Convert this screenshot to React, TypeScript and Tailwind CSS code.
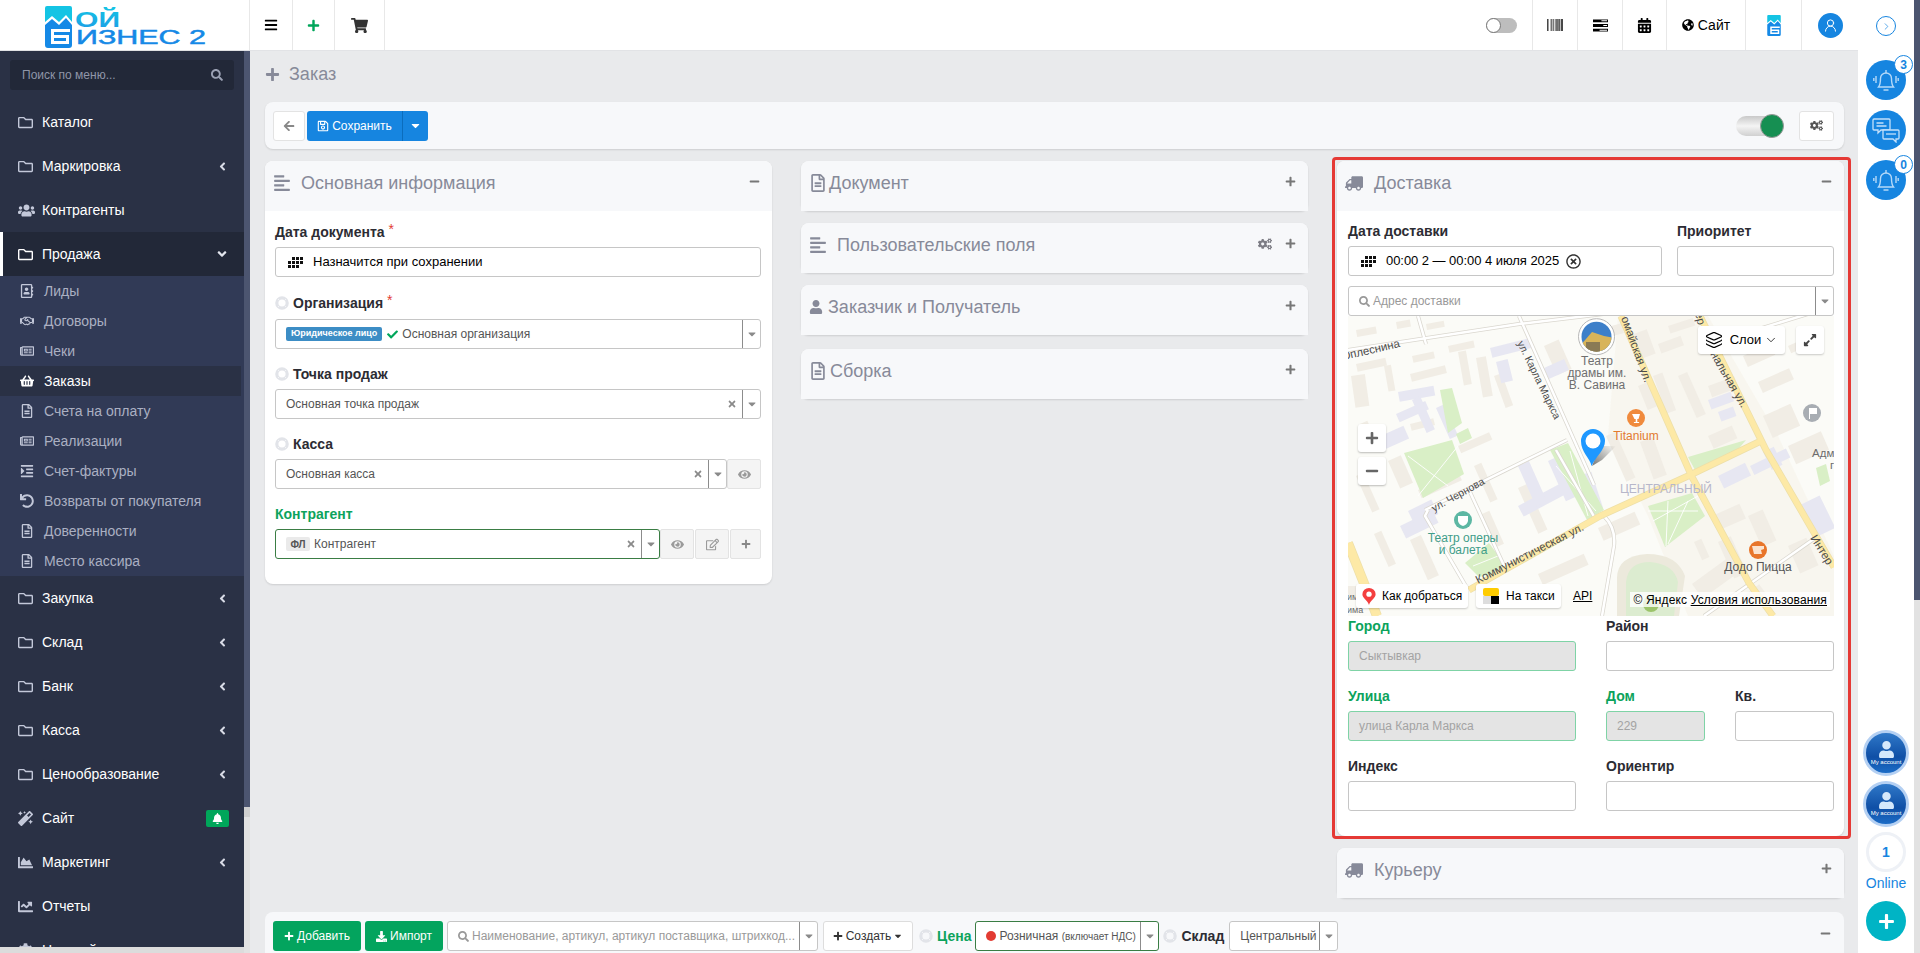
import { ReactNode } from "react";
import {
  FaAlignLeft, FaAngleDown, FaAngleLeft, FaArrowLeft, FaBars, FaBell, FaCalendarAlt, FaCaretDown, FaChartArea,
  FaChartLine, FaCheck, FaCog, FaCogs, FaDownload, FaEye, FaGlobeAmericas, FaIndent, FaMagic, FaMinus,
  FaPlus, FaRegAddressBook, FaRegEdit, FaRegFileAlt, FaRegFolder, FaRegHandshake, FaRegNewspaper, FaRegSave, FaSearch, FaShoppingBasket,
  FaShoppingCart, FaTimes, FaTruck, FaUndo, FaUser, FaUsers, FaBarcode, FaExpandAlt, FaRegTimesCircle,
} from "react-icons/fa";
import { ChevronDown, ChevronRight, Layers, UserRound } from "lucide-react";

const topMenu = [
  { label: "Каталог", icon: FaRegFolder },
  { label: "Маркировка", icon: FaRegFolder, arrow: true },
  { label: "Контрагенты", icon: FaUsers, big: true },
];

const subMenu = [
  { label: "Лиды", icon: FaRegAddressBook },
  { label: "Договоры", icon: FaRegHandshake },
  { label: "Чеки", icon: FaRegNewspaper },
  { label: "Заказы", icon: FaShoppingBasket, active: true },
  { label: "Счета на оплату", icon: FaRegFileAlt },
  { label: "Реализации", icon: FaRegNewspaper },
  { label: "Счет-фактуры", icon: FaIndent },
  { label: "Возвраты от покупателя", icon: FaUndo },
  { label: "Доверенности", icon: FaRegFileAlt },
  { label: "Место кассира", icon: FaRegFileAlt },
];

const bottomMenu = [
  { label: "Закупка", icon: FaRegFolder, arrow: true },
  { label: "Склад", icon: FaRegFolder, arrow: true },
  { label: "Банк", icon: FaRegFolder, arrow: true },
  { label: "Касса", icon: FaRegFolder, arrow: true },
  { label: "Ценообразование", icon: FaRegFolder, arrow: true },
  { label: "Сайт", icon: FaMagic, bell: true },
  { label: "Маркетинг", icon: FaChartArea, arrow: true },
  { label: "Отчеты", icon: FaChartLine },
  { label: "Настройки", icon: FaCog },
];

type MenuEntry = { label: string; icon: any; arrow?: boolean; bell?: boolean; big?: boolean };

function MenuRow({ item }: { item: MenuEntry }) {
  return (
    <div className="flex h-[44px] items-center pl-[18px] pr-[15px] text-[14px] text-white">
      <span className="flex w-[24px] shrink-0 text-[#c3c8d9]">
        <item.icon size={item.big ? 17 : 15} />
      </span>
      <span>{item.label}</span>
      {item.arrow && <FaAngleLeft size={13} className="ml-auto text-[#d8dbe6]" />}
      {item.bell && (
        <span className="ml-auto flex h-[17px] w-[23px] items-center justify-center rounded-[2px] bg-[#00a65a]">
          <FaBell size={11} className="text-white" />
        </span>
      )}
    </div>
  );
}

function Sidebar() {
  return (
    <aside className="flex h-full w-[250px] shrink-0">
      <div className="flex h-full w-[244px] flex-col overflow-hidden bg-[#2a3145]">
        <div className="px-[10px] pb-[10px] pt-[9px]">
          <div className="flex h-[30px] items-center justify-between rounded-[3px] bg-[#222838] pl-[12px] pr-[11px] text-[12px] text-[#9096a8]">
            <span>Поиск по меню...</span>
            <FaSearch size={12} className="text-[#9ba1b3]" />
          </div>
        </div>
        <div className="min-h-0 flex-1 overflow-hidden">
          {topMenu.map((m) => <MenuRow key={m.label} item={m} />)}
          <div className="flex h-[44px] items-center border-l-[3px] border-white bg-[#222838] pl-[15px] pr-[15px] text-[14px] text-white">
            <FaRegFolder size={15} className="mr-[9px] text-white" />
            <span>Продажа</span>
            <FaAngleDown size={14} className="ml-auto text-[#e3e6ee]" />
          </div>
          <div className="flex flex-col bg-[#313a56]">
            {subMenu.map((m) => (
              <div key={m.label} className={`mr-[3px] flex h-[30px] items-center pl-[20px] text-[14px] ${m.active ? "bg-[#2a3145] text-white" : "text-[#abb0c2]"}`}>
                <span className={`flex w-[24px] shrink-0 ${m.active ? "text-white" : "text-[#c3c8d9]"}`}>
                  <m.icon size={14} />
                </span>
                {m.label}
              </div>
            ))}
          </div>
          {bottomMenu.map((m) => <MenuRow key={m.label} item={m} />)}
        </div>
        <div className="h-[6px] shrink-0 bg-[#dcdcdc]" />
      </div>
      <div className="flex h-full w-[6px] flex-col bg-[#e2e2e2]">
        <div className="h-[756px] bg-[#4c5570]" />
        <div className="h-[10px] bg-[#cfcfcf]" />
      </div>
    </aside>
  );
}

function LogoMark({ className }: { className: string }) {
  return (
    <svg viewBox="0 0 27 42" className={className}>
      <path d="M0 2q0-2 2-2h23q2 0 2 2v14l-6-7-7 7-7-6-7 6z" fill="#14c4e4" />
      <path d="M0 19l7-6 7 6 7-7 6 7v20q0 3-3 3H3q-3 0-3-3z" fill="#1589e6" />
      <path d="M6 23h19v3H9v3h15v9H6z" fill="#fff" />
      <path d="M9 32h12v3H9z" fill="#1589e6" />
    </svg>
  );
}

function Logo() {
  return (
    <div className="flex h-full w-[250px] shrink-0 items-start border-r border-[#e8e8e8] pl-[45px] pt-[6px]">
      <LogoMark className="h-[42px] w-[27px]" />
      <svg viewBox="0 0 135 42" className="h-[42px] w-[135px]">
        <defs>
          <linearGradient id="logoTop" x1="0" y1="0" x2="0" y2="1">
            <stop offset="0" stopColor="#14c4e4" />
            <stop offset="1" stopColor="#1d9ae6" />
          </linearGradient>
        </defs>
        <text x="3" y="21" textLength="45" lengthAdjust="spacingAndGlyphs" fontFamily="Liberation Sans" fontSize="22" fontWeight="700" fill="url(#logoTop)">ОЙ</text>
        <text x="4" y="38" textLength="130" lengthAdjust="spacingAndGlyphs" fontFamily="Liberation Sans" fontSize="20" fill="#1589e6" stroke="#1589e6" strokeWidth="0.5">ИЗНЕС 2</text>
      </svg>
    </div>
  );
}

function HeaderCell({ width, children }: { width: string; children: ReactNode }) {
  return <div className={`flex h-full items-center justify-center border-r border-[#e8e8e8] ${width}`}>{children}</div>;
}

function TasksIcon() {
  return (
    <svg viewBox="0 0 16 13" className="h-[13px] w-[15px]">
      <path d="M0 0h16v3H0zM0 5h16v3H0zM0 10h16v3H0z" fill="#000" />
      <path d="M9 1h6v1H9zM11 6h4v1h-4zM7 11h8v1H7z" fill="#fff" />
    </svg>
  );
}

function Header() {
  return (
    <header className="flex h-[51px] shrink-0 items-stretch border-b border-[#e2e3e6] bg-white">
      <Logo />
      <HeaderCell width="w-[43px]"><FaBars size={14} className="text-black" /></HeaderCell>
      <HeaderCell width="w-[42px]"><FaPlus size={13} className="text-[#00a65a]" /></HeaderCell>
      <HeaderCell width="w-[50px]"><FaShoppingCart size={17} className="text-[#333]" /></HeaderCell>
      <div className="ml-auto flex items-center">
        <div className="mr-[15px] flex h-[15px] w-[31px] items-center rounded-full bg-[#bdbdbd]">
          <span className="h-[15px] w-[15px] rounded-full border border-[#777] bg-white" />
        </div>
        <div className="flex h-full border-l border-[#e8e8e8]">
          <HeaderCell width="w-[45px]"><FaBarcode size={16} className="text-black" /></HeaderCell>
          <HeaderCell width="w-[45px]"><TasksIcon /></HeaderCell>
          <HeaderCell width="w-[44px]"><FaCalendarAlt size={15} className="text-black" /></HeaderCell>
          <HeaderCell width="w-[79px]">
            <FaGlobeAmericas size={12} className="mr-[4px] text-black" />
            <span className="text-[14px] text-black">Сайт</span>
          </HeaderCell>
          <HeaderCell width="w-[56px]"><LogoMark className="h-[21px] w-[14px]" /></HeaderCell>
          <div className="flex h-full w-[56px] items-center justify-center">
            <span className="flex h-[25px] w-[25px] items-center justify-center rounded-full bg-[#1685e0]">
              <UserRound size={15} className="text-white" strokeWidth={1.6} />
            </span>
          </div>
        </div>
      </div>
    </header>
  );
}

function GridIcon() {
  return (
    <svg viewBox="0 0 15 11" className="h-[11px] w-[15px]" fill="#111">
      <path d="M4 0h3v3H4zM8 0h3v3H8zM12 0h3v3h-3zM0 4h3v3H0zM4 4h3v3H4zM8 4h3v3H8zM12 4h3v3h-3zM0 8h3v3H0zM4 8h3v3H4zM8 8h3v3H8z" />
    </svg>
  );
}

// pale life ring next to the select labels
function Ring() {
  return (
    <svg viewBox="0 0 14 14" className="mr-[4px] h-[14px] w-[14px] shrink-0" fill="none">
      <circle cx="7" cy="7" r="5.200" stroke="#e2e4e9" strokeWidth="3.200" />
      <path d="M3 3l2 2M11 3L9 5M3 11l2-2M11 11L9 9" stroke="#f4f5f7" strokeWidth="1" />
    </svg>
  );
}

function Label({ children, color = "text-[#2c2c33]", className = "" }: { children: ReactNode; color?: string; className?: string }) {
  return <div className={`flex h-5 items-center text-[14px] font-bold ${color} ${className}`}>{children}</div>;
}

function Star() {
  return <span className="relative -top-[3px] ml-[4px] text-[14px] font-normal text-[#e23b32]">*</span>;
}

function Arrow() {
  return (
    <span className="flex h-full w-[18px] shrink-0 items-center justify-center border-l border-[#8c8c8c] text-[#8a8a8a]">
      <FaCaretDown size={12} />
    </span>
  );
}

function Addon({ children, className = "w-[34px]" }: { children: ReactNode; className?: string }) {
  return (
    <span className={`flex h-[30px] shrink-0 items-center justify-center rounded-[2px] border border-[#e3e3e3] bg-[#f4f4f4] text-[#9a9a9a] ${className}`}>
      {children}
    </span>
  );
}

function Select({ children, clear, border = "border-[#c6c6c6]", className = "flex-1" }: { children: ReactNode; clear?: boolean; border?: string; className?: string }) {
  return (
    <div className={`flex h-[30px] items-center rounded-[3px] border bg-white pl-[10px] text-[12px] text-[#555] ${border} ${className}`}>
      <div className="flex min-w-0 flex-1 items-center overflow-hidden whitespace-nowrap">{children}</div>
      {clear && <FaTimes size={10} className="mr-[5px] shrink-0 text-[#8a8a8a]" />}
      <Arrow />
    </div>
  );
}

function Input({ className = "", value, disabled }: { className?: string; value?: string; disabled?: boolean }) {
  return (
    <div className={`flex h-[30px] items-center rounded-[3px] border pl-[10px] text-[12px] ${disabled ? "border-[#7fd3a6] bg-[#e4e4e4] text-[#a3a3a3]" : "border-[#c6c6c6] bg-white"} ${className}`}>
      {value}
    </div>
  );
}

function CardHead({ icon, title, open, gear, gap = "ml-[10px]" }: { icon: ReactNode; title: string; open?: boolean; gear?: boolean; gap?: string }) {
  return (
    <div className="flex h-[50px] items-start rounded-t-[8px] bg-[#f7f8fa] pl-[8px] pr-[12px] pt-[11px] text-[#878a99]">
      <span className="flex h-[22px] w-[18px] shrink-0 items-center text-[#878a99]">{icon}</span>
      <span className={`text-[18px] leading-[22px] ${gap}`}>{title}</span>
      {gear && <FaCogs size={14} className="ml-auto mr-[13px] mt-[3px] text-[#7d7d85]" />}
      {open ? <FaMinus size={11} className="ml-auto mt-[4px] text-[#777]" /> : <FaPlus size={11} className={`${gear ? "" : "ml-auto"} mt-[4px] text-[#777]`} />}
    </div>
  );
}

function ClosedCard(props: { icon: ReactNode; title: string; gear?: boolean; gap?: string; className?: string }) {
  return (
    <div className={`rounded-[8px] bg-[#f7f8fa] shadow-[0_1px_2px_rgba(0,0,0,0.12)] ${props.className ?? ""}`}>
      <CardHead icon={props.icon} title={props.title} gear={props.gear} gap={props.gap} />
    </div>
  );
}

function MainInfo() {
  return (
    <div className="rounded-[8px] bg-white shadow-[0_1px_2px_rgba(0,0,0,0.12)]">
      <CardHead icon={<FaAlignLeft size={18} />} title="Основная информация" open />
      <div className="pb-[25px] pl-[10px] pr-[11px] pt-[11px]">
        <Label className="mb-[5px]">Дата документа<Star /></Label>
        <div className="mb-[16px] flex h-[30px] items-center rounded-[3px] border border-[#c6c6c6] bg-white pl-[12px] text-[13px] text-black">
          <GridIcon />
          <span className="ml-[10px]">Назначится при сохранении</span>
        </div>
        <Label className="mb-[6px]"><Ring />Организация<Star /></Label>
        <Select className="mb-[15px]">
          <span className="mr-[5px] flex h-[14px] items-center rounded-[2px] bg-[#3c8dc5] px-[5px] text-[9px] font-bold text-white">Юридическое лицо</span>
          <FaCheck size={11} className="mr-[4px] text-[#00a65a]" />
          Основная организация
        </Select>
        <Label className="mb-[5px]"><Ring />Точка продаж</Label>
        <Select clear className="mb-[15px]">Основная точка продаж</Select>
        <Label className="mb-[5px]"><Ring />Касса</Label>
        <div className="mb-[15px] flex">
          <Select clear>Основная касса</Select>
          <Addon><FaEye size={13} /></Addon>
        </div>
        <Label className="mb-[5px]" color="text-[#0ca35c]">Контрагент</Label>
        <div className="flex">
          <Select clear border="border-[#3a7d44]">
            <span className="mr-[4px] flex h-[14px] w-[24px] items-center justify-center rounded-[2px] bg-[#eaeaea] text-[10px] font-bold text-[#555]">ФЛ</span>
            Контрагент
          </Select>
          <Addon className="w-[34px]"><FaEye size={13} /></Addon>
          <Addon className="ml-[1px] w-[34px]"><FaRegEdit size={13} /></Addon>
          <Addon className="ml-[1px] w-[31px] text-[#888]"><FaPlus size={10} /></Addon>
        </div>
      </div>
    </div>
  );
}

const buildings: { c: string; r: number[][] }[] = [
  {
    c: "#f1ede5",
    r: [
      [8, 14, 20, 7, -10], [48, 6, 14, 7, -10], [78, 8, 18, 6, -10], [100, 30, 26, 7, -12], [64, 40, 22, 7, -12], [8, 48, 30, 8, -12], [36, 50, 7, 26, -10],
      [3, 60, 14, 32, -8], [62, 58, 36, 8, -14], [110, 36, 8, 34, -10], [128, 42, 10, 40, -10], [146, 60, 8, 34, -20], [196, 30, 16, 32, -24], [256, 12, 18, 10, -15],
      [280, 20, 20, 26, -20], [310, 28, 24, 10, -20], [320, 10, 26, 8, -18], [360, 70, 28, 12, -20], [305, 60, 10, 40, -20], [330, 60, 10, 46, -24], [290, 70, 10, 26, -22],
      [395, 40, 30, 12, -24], [410, 66, 34, 12, -24], [440, 30, 30, 8, -24], [415, 100, 30, 24, -24], [440, 130, 36, 20, -24], [360, 120, 26, 14, -24], [292, 126, 14, 40, -20],
      [258, 120, 10, 50, -24], [8, 160, 8, 40, -24], [40, 145, 14, 30, -24], [70, 174, 44, 9, -24], [26, 218, 8, 36, -24], [62, 224, 12, 44, -24],
      [134, 198, 8, 36, -24], [170, 172, 10, 50, -24], [364, 200, 30, 16, -24], [370, 226, 14, 40, -24], [400, 200, 16, 34, -24], [440, 230, 20, 30, -24],
      [250, 212, 40, 14, -24], [190, 258, 50, 12, -24], [344, 268, 50, 18, -36], [395, 280, 20, 12, -36], [110, 130, 34, 8, -24], [126, 150, 8, 40, -24], [346, 226, 8, 20, -24],
      [12, 108, 8, 24, -24], [62, 108, 24, 7, -14], [0, 270, 18, 10, 0],
    ],
  },
  {
    c: "#e7e7f2",
    r: [
      [142, 32, 40, 10, -14], [148, 46, 12, 22, -14], [196, 52, 22, 12, -24], [50, 76, 36, 10, -10], [48, 98, 32, 9, -24], [64, 84, 9, 36, -24], [88, 92, 9, 34, -24],
      [28, 122, 30, 14, -24], [360, 84, 24, 10, -20], [370, 96, 16, 10, -20], [170, 190, 70, 12, -28], [230, 160, 14, 38, -18], [170, 150, 12, 44, -24], [200, 145, 12, 44, -24],
      [52, 210, 36, 14, -26], [60, 195, 26, 16, -26], [402, 150, 40, 10, -26], [415, 136, 12, 20, -26], [370, 160, 30, 14, -26], [450, 190, 24, 36, -26],
    ],
  },
];

const parks = [
  "56,137 104,124 116,158 75,182",
  "202,134 220,127 256,194 239,204",
  "300,190 344,177 357,200 317,231",
  "340,141 398,124 381,144 347,154",
  "117,247 141,227 161,254 131,261",
  "92,74 104,72 114,107 100,117",
  "468,152 478,148 482,165 472,170",
  "108,118 120,112 124,122 112,128",
];

const thinStreets = "M70 0 78 28M171 0 246 169M77 194 219 124M80 194l-3 6 42 72M122 176l36 78M208 134l40 70M256 200q12 12 10 30L254 300M356 300 470 220M388 20 486 -10";
const mainRoads = "M273 0 344 161 401 267 425 300M121 274 252 200 340 160 415 124M352 0 418 134 486 251";

function MapDrawing() {
  return (
    <svg viewBox="0 0 486 300" className="h-[300px] w-[486px]">
      <rect width="486" height="300" fill="#fbfbf7" />
      <path d="M270 0H360L430 120 486 240V300H340L300 200 260 120z" fill="#f8f5ec" opacity="0.8" />
      {buildings.map((b) =>
        b.r.map((r, i) => (
          <rect key={b.c + i} x={r[0]} y={r[1]} width={r[2]} height={r[3]} fill={b.c} transform={`rotate(${r[4]} ${r[0]} ${r[1]})`} />
        ))
      )}
      {parks.map((p) => <polygon key={p} points={p} fill="#d9efc6" />)}
      <g stroke="#fff" strokeWidth="1" fill="none" opacity="0.9">
        <path d="M60 140 100 170M70 180 110 130M208 150 248 195M222 135 240 200M300 195 350 195M320 185 318 230M305 205 350 180M340 185 320 228M125 250 150 240" />
      </g>
      <path d="M269 300V262q0-22 30-24 30 0 38 22l-6 40z" fill="#ece9dc" />
      <path d="M278 300v-34q2-20 24-20 24 2 28 20l-4 34z" fill="#dcecd0" />
      <g fill="none" stroke="#dad7cf" strokeWidth="4">
        <path d="M0 34 171 8 272-4" />
        <path d={thinStreets} />
      </g>
      <g fill="none" stroke="#fff" strokeWidth="2.500">
        <path d="M0 34 171 8 272-4" />
        <path d={thinStreets} />
      </g>
      <g fill="none" stroke="#eddfa8" strokeWidth="7">
        <path d={mainRoads} />
        <path d="M0 227 29 300" strokeWidth="10" />
      </g>
      <g fill="none" stroke="#fde9a6" strokeWidth="5.500">
        <path d={mainRoads} />
        <path d="M0 227 29 300" strokeWidth="8.500" />
      </g>
      <g fontFamily="Liberation Sans" fontSize="10.500" fill="#4c4c4c">
        <text x="-6" y="43" transform="rotate(-13 0 42)" fontSize="11.500">Оплеснина</text>
        <text transform="translate(169 27) rotate(64)">ул. Карла Маркса</text>
        <text transform="translate(273 2) rotate(70)" fontSize="11.500">омайская ул.</text>
        <text transform="translate(362 38) rotate(60)" fontSize="11.500">нальная ул.</text>
        <text transform="translate(347 -3) rotate(76)" fontSize="11.500">ер</text>
        <text transform="translate(86 196) rotate(-29)">ул. Чернова</text>
        <text transform="translate(130 268) rotate(-27)" fontSize="11.500">Коммунистическая ул.</text>
        <text transform="translate(462 222) rotate(58)" fontSize="11.500">Интер</text>
        <text x="464" y="141" fontSize="11.500" fill="#6c6c6c">Адм</text>
        <text x="482" y="153" fontSize="11.500" fill="#6c6c6c">г</text>
        <text x="-1" y="284" fontSize="9" fill="#6c6c6c">им</text>
        <text x="-1" y="297" fontSize="9" fill="#6c6c6c">има</text>
      </g>
      <clipPath id="theatre"><circle cx="248.500" cy="20.700" r="15" /></clipPath>
      <circle cx="248.500" cy="20.700" r="18" fill="#fff" stroke="#b8b8b8" />
      <g clipPath="url(#theatre)">
        <rect x="232" y="4" width="34" height="34" fill="#3d7fc9" />
        <path d="M232 30l12-14 12 4 10 2v16h-34z" fill="#d8b45a" />
        <path d="M238 26h14v12h-14z" fill="#8a7a55" />
      </g>
      <g fontFamily="Liberation Sans" fontSize="12" fill="#6f6f6f" textAnchor="middle">
        <text x="249" y="49">Театр</text>
        <text x="249" y="61">драмы им.</text>
        <text x="249" y="73">В. Савина</text>
      </g>
      <circle cx="288" cy="102" r="9" fill="#f08a3c" />
      <path d="M284 98h8l-1.500 5h-1.200v3h1.800v1h-5.200v-1h1.800v-3h-1.200z" fill="#fff" />
      <text x="288" y="124" textAnchor="middle" fontFamily="Liberation Sans" fontSize="12" fill="#e27a2f">Titanium</text>
      <text x="318" y="177" textAnchor="middle" fontFamily="Liberation Sans" fontSize="12" fill="#b7b7ca">ЦЕНТРАЛЬНЫЙ</text>
      <circle cx="115" cy="204" r="9" fill="#5cb7a3" />
      <path d="M110 200h10v5q-1 4-5 5-4-1-5-5z" fill="#fff" />
      <g fontFamily="Liberation Sans" fontSize="12" fill="#3f9d89" textAnchor="middle">
        <text x="115" y="226">Театр оперы</text>
        <text x="115" y="238">и балета</text>
      </g>
      <circle cx="410" cy="234" r="9" fill="#e8752a" />
      <path d="M404 230h12v3l-3 1 1 4h-8z" fill="#fbe3cf" />
      <text x="410" y="255" textAnchor="middle" fontFamily="Liberation Sans" fontSize="12" fill="#555">Додо Пицца</text>
      <circle cx="464" cy="97" r="9" fill="#a8adb3" />
      <path d="M461 92h1v11h-1zM462 92h7v6h-7z" fill="#fff" />
      <defs>
        <linearGradient id="pinShadow" x1="0" y1="1" x2="1" y2="0">
          <stop offset="0" stopColor="#555" stopOpacity="0.8" />
          <stop offset="1" stopColor="#555" stopOpacity="0" />
        </linearGradient>
      </defs>
      <path d="M244 150 252 130 268 130 254 144z" fill="url(#pinShadow)" />
      <path d="M243.500 150 C242 142 233 136 233 125 a12 12 0 1 1 24 0 C257 134 248 140 243.500 150z" fill="#1e98ff" />
      <circle cx="245" cy="125" r="7.500" fill="#fff" />
      <circle cx="303" cy="288" r="8" fill="#9cc46a" />
    </svg>
  );
}

function MapBlock() {
  return (
    <div className="relative h-[300px] w-full overflow-hidden">
      <MapDrawing />
      <div className="absolute right-[49px] top-[10px] flex h-[28px] w-[87px] items-center justify-center rounded-[3px] bg-white text-[13px] text-black shadow-[0_1px_2px_rgba(0,0,0,0.2)]">
        <Layers size={18} strokeWidth={1.5} className="mr-[7px]" />Слои<ChevronDown size={14} strokeWidth={1.3} className="ml-[3px]" />
      </div>
      <div className="absolute right-[10px] top-[10px] flex h-[28px] w-[28px] items-center justify-center rounded-[3px] bg-white text-[#444] shadow-[0_1px_2px_rgba(0,0,0,0.2)]">
        <FaExpandAlt size={14} />
      </div>
      <div className="absolute left-[10px] top-[108px] flex h-[28px] w-[28px] items-center justify-center rounded-[3px] bg-white text-[#666] shadow-[0_1px_2px_rgba(0,0,0,0.25)]"><FaPlus size={14} /></div>
      <div className="absolute left-[10px] top-[141px] flex h-[28px] w-[28px] items-center justify-center rounded-[3px] bg-white text-[#666] shadow-[0_1px_2px_rgba(0,0,0,0.25)]"><FaMinus size={14} /></div>
      <div className="absolute left-[8px] top-[268px] flex h-[24px] w-[112px] items-center rounded-[3px] bg-white pl-[6px] text-[12px] text-black shadow-[0_1px_2px_rgba(0,0,0,0.2)]">
        <svg viewBox="0 0 14 18" className="mr-[6px] h-[17px] w-[14px]">
          <path d="M7 18C6 13 0 11 0 6.500a7 6.500 0 0 1 14 0C14 11 8 13 7 18z" fill="#f43f3f" />
          <circle cx="7" cy="6.500" r="2.800" fill="#fff" />
        </svg>
        Как добраться
      </div>
      <div className="absolute left-[128px] top-[268px] flex h-[24px] w-[85px] items-center rounded-[3px] bg-white pl-[7px] text-[12px] text-black shadow-[0_1px_2px_rgba(0,0,0,0.2)]">
        <svg viewBox="0 0 16 16" className="mr-[7px] h-[16px] w-[16px]">
          <rect width="16" height="8" fill="#fc0" rx="2" />
          <rect y="8" width="8" height="8" fill="#ddd" />
          <rect x="8" y="8" width="8" height="8" fill="#000" />
        </svg>
        На такси
      </div>
      <span className="absolute left-[225px] top-[273px] text-[12px] leading-[14px] text-black underline">API</span>
      <div className="absolute right-[4px] top-[276px] flex h-[15px] items-center whitespace-nowrap bg-white/80 px-[3px] text-[12px] tracking-[0.15px] text-black">
        © Яндекс&nbsp;<span className="underline">Условия использования</span>
      </div>
    </div>
  );
}

function Delivery() {
  return (
    <div className="relative rounded-[8px] bg-white shadow-[0_1px_2px_rgba(0,0,0,0.12)]">
      <CardHead icon={<FaTruck size={19} className="-scale-x-100" />} title="Доставка" open gap="ml-[11px]" />
      <div className="pb-[25px] pl-[11px] pr-[10px] pt-[10px]">
        <div className="grid grid-cols-[314px_157px] gap-x-[15px]">
          <div>
            <Label className="mb-[5px]">Дата доставки</Label>
            <div className="flex h-[30px] items-center rounded-[3px] border border-[#c6c6c6] pl-[12px] text-[13px] text-black">
              <GridIcon />
              <span className="ml-[10px] whitespace-nowrap tracking-[-0.05px]">00:00 2 — 00:00 4 июля 2025</span>
              <FaRegTimesCircle size={15} className="ml-[7px] text-[#333]" />
            </div>
          </div>
          <div>
            <Label className="mb-[5px]">Приоритет</Label>
            <Input />
          </div>
        </div>
        <div className="mt-[10px] flex h-[30px] items-center rounded-[3px] border border-[#c6c6c6] pl-[10px] text-[12px] text-[#999]">
          <FaSearch size={11} className="mr-[3px] text-[#999]" />
          <span className="flex-1">Адрес доставки</span>
          <Arrow />
        </div>
        <MapBlock />
        <div className="grid grid-cols-[228px_228px] gap-x-[30px]">
          <div>
            <Label className="mb-[5px]" color="text-[#0ca35c]">Город</Label>
            <Input value="Сыктывкар" disabled />
          </div>
          <div>
            <Label className="mb-[5px]">Район</Label>
            <Input />
          </div>
        </div>
        <div className="mt-[15px] grid grid-cols-[228px_99px_99px] gap-x-[30px]">
          <div>
            <Label className="mb-[5px]" color="text-[#0ca35c]">Улица</Label>
            <Input value="улица Карла Маркса" disabled />
          </div>
          <div>
            <Label className="mb-[5px]" color="text-[#0ca35c]">Дом</Label>
            <Input value="229" disabled />
          </div>
          <div>
            <Label className="mb-[5px]">Кв.</Label>
            <Input />
          </div>
        </div>
        <div className="mt-[15px] grid grid-cols-[228px_228px] gap-x-[30px]">
          <div>
            <Label className="mb-[5px]">Индекс</Label>
            <Input />
          </div>
          <div>
            <Label className="mb-[5px]">Ориентир</Label>
            <Input />
          </div>
        </div>
      </div>
      <div className="pointer-events-none absolute -bottom-[3px] -left-[5px] -right-[7px] -top-[4px] rounded-[4px] border-[3px] border-[#e53935]" />
    </div>
  );
}

function ProductBar() {
  return (
    <div className="mt-[14px] flex h-[50px] items-start rounded-t-[8px] bg-[#f7f8fa] pl-[8px] pr-[13px] pt-[9px] text-[12px]">
      <span className="flex h-[30px] w-[88px] items-center justify-center rounded-[3px] bg-[#03a45e] text-white">
        <FaPlus size={10} className="mr-[3px]" />Добавить
      </span>
      <span className="ml-[4px] flex h-[30px] w-[78px] items-center justify-center rounded-[3px] bg-[#03a45e] text-white">
        <FaDownload size={11} className="mr-[3px]" />Импорт
      </span>
      <div className="ml-[4px] flex h-[30px] w-[371px] items-center rounded-[3px] border border-[#c6c6c6] bg-white pl-[10px] text-[#999]">
        <FaSearch size={11} className="mr-[3px] shrink-0" />
        <span className="min-w-0 flex-1 truncate">Наименование, артикул, артикул поставщика, штрихкод...</span>
        <Arrow />
      </div>
      <span className="ml-[5px] flex h-[30px] w-[90px] items-center justify-center rounded-[3px] border border-[#ddd] bg-white text-[#333]">
        <FaPlus size={10} className="mr-[3px]" />Создать<FaCaretDown size={10} className="ml-[2px]" />
      </span>
      <span className="ml-[6px] flex h-[30px] items-center"><Ring /></span>
      <span className="flex h-[30px] items-center text-[14px] font-bold text-[#0ca35c]">Цена</span>
      <div className="ml-[4px] flex h-[30px] w-[184px] items-center rounded-[3px] border border-[#3a7d44] bg-white pl-[10px] text-[#555]">
        <span className="mr-[3px] h-[10px] w-[10px] shrink-0 rounded-full bg-[#e23b32]" />
        <span className="min-w-0 flex-1 overflow-hidden whitespace-nowrap">Розничная <span className="text-[10px]">(включает НДС)</span></span>
        <Arrow />
      </div>
      <span className="ml-[4px] flex h-[30px] items-center"><Ring /></span>
      <span className="flex h-[30px] items-center text-[14px] font-bold text-[#2c2c33]">Склад</span>
      <div className="ml-[5px] flex h-[30px] w-[109px] items-center rounded-[3px] border border-[#c6c6c6] bg-white pl-[10px] text-[#555]">
        <span className="min-w-0 flex-1 overflow-hidden whitespace-nowrap">Центральный</span>
        <Arrow />
      </div>
      <FaMinus size={11} className="ml-auto mt-[7px] text-[#777]" />
    </div>
  );
}

function BellIcon() {
  return (
    <svg viewBox="0 0 26 26" className="h-[26px] w-[26px]" fill="none" stroke="#b5d9f8" strokeWidth="1.400">
      <path d="M5.500 20c2-2.500 2-5 2-8.500a5.500 5.500 0 0 1 11 0c0 3.500 0 6 2 8.500z" />
      <path d="M13 3v3M10.500 23h5M3 9v7M23 9v7" />
      <path d="M0.800 11v3M25.200 11v3" />
    </svg>
  );
}

function ChatIcon() {
  return (
    <svg viewBox="0 0 28 26" className="h-[26px] w-[28px]" fill="none" stroke="#c4e0fa" strokeWidth="1.300">
      <path d="M2 2h15a1 1 0 0 1 1 1v9a1 1 0 0 1-1 1H9l-3 3v-3H2a1 1 0 0 1-1-1V3a1 1 0 0 1 1-1z" />
      <path d="M4.500 6h7M4.500 9h10" />
      <path d="M11 13h15a1 1 0 0 1 1 1v7a1 1 0 0 1-1 1h-2v3l-3-3h-9a1 1 0 0 1-1-1z" fill="#1685e0" />
      <path d="M14 17h10" />
    </svg>
  );
}

function RoundButton({ children, badge, className = "" }: { children: ReactNode; badge?: string; className?: string }) {
  return (
    <div className={`relative flex h-[40px] w-[40px] items-center justify-center rounded-full bg-[#1685e0] ${className}`}>
      {children}
      {badge && (
        <span className="absolute -right-[7px] -top-[5px] flex h-[19px] w-[19px] items-center justify-center rounded-full border border-[#1685e0] bg-white text-[12px] font-bold text-[#1685e0]">
          {badge}
        </span>
      )}
    </div>
  );
}

function AccountAvatar() {
  return (
    <div className="flex h-[46px] w-[46px] flex-col items-center justify-center rounded-full border-[3px] border-[#b4d0f3] bg-[linear-gradient(#2f78c8,#0f4fa6_60%,#1c6cc6)] text-white">
      <FaUser size={17} className="text-[#d5e8fb]" />
      <span className="whitespace-nowrap text-[6px] leading-[8px]">My account</span>
    </div>
  );
}

function RightRail() {
  return (
    <aside className="flex h-full w-[62px] shrink-0">
      <div className="flex h-full w-[56px] flex-col items-center bg-white pb-[12px]">
        <span className="mt-[16px] flex h-[20px] w-[20px] items-center justify-center rounded-full border border-[#1685e0]">
          <ChevronRight size={11} className="text-[#1685e0]" strokeWidth={1.5} />
        </span>
        <RoundButton badge="3" className="mt-[24px]"><BellIcon /></RoundButton>
        <RoundButton className="mt-[10px]"><ChatIcon /></RoundButton>
        <RoundButton badge="0" className="mt-[10px]"><BellIcon /></RoundButton>
        <div className="mt-auto flex flex-col items-center">
          <AccountAvatar />
          <div className="mt-[5px]"><AccountAvatar /></div>
          <span className="mt-[5px] flex h-[40px] w-[40px] items-center justify-center rounded-full border-[3px] border-[#eef1f6] text-[14px] font-bold text-[#1685e0]">1</span>
          <span className="mt-[1px] text-[14px] leading-[20px] text-[#1685e0]">Online</span>
          <span className="mt-[8px] flex h-[40px] w-[40px] items-center justify-center rounded-full bg-[#00b4c5] text-white"><FaPlus size={17} /></span>
        </div>
      </div>
      <div className="flex h-full w-[6px] flex-col bg-[#e2e2e2]">
        <div className="h-[600px] bg-[#4c5570]" />
      </div>
    </aside>
  );
}

export default function App() {
  return (
    <div className="flex h-[953px] w-[1920px] overflow-hidden bg-[#e9eaec] font-['Liberation_Sans',Arial,sans-serif]">
      <div className="flex min-w-0 flex-1 flex-col">
        <Header />
        <div className="flex min-h-0 flex-1">
          <Sidebar />
          <main className="min-w-0 flex-1 overflow-hidden pl-[15px] pr-[14px]">
            <div className="flex h-[51px] items-center pb-[4px] text-[#878a99]">
              <FaPlus size={15} />
              <span className="ml-[9px] text-[18px]">Заказ</span>
            </div>
            <div className="flex h-[47px] items-center rounded-[8px] bg-[#f7f8fa] px-[8px] pr-[10px] shadow-[0_1px_2px_rgba(0,0,0,0.12)]">
              <span className="flex h-[30px] w-[32px] items-center justify-center rounded-[3px] border border-[#e3e3e3] bg-white text-[#888]">
                <FaArrowLeft size={12} />
              </span>
              <div className="ml-[2px] flex h-[30px] items-center rounded-[3px] bg-[#1685e0] text-[12px] text-white">
                <span className="flex h-full w-[96px] items-center justify-center border-r border-[#0b6dbd]">
                  <FaRegSave size={12} className="mr-[3px]" />Сохранить
                </span>
                <span className="flex h-full w-[25px] items-center justify-center"><FaCaretDown size={13} /></span>
              </div>
              <div className="ml-auto mr-[15px] flex items-center">
                <div className="relative h-[20px] w-[42px] rounded-full bg-[linear-gradient(#c9c9c9,#f4f4f4_50%,#d0d0d0)]">
                  <span className="absolute -right-[6px] -top-[2px] h-[24px] w-[24px] rounded-full border border-[#999] bg-[#168f52]" />
                </div>
                <span className="w-[6px]" />
              </div>
              <span className="flex h-[30px] w-[35px] items-center justify-center rounded-[3px] border border-[#e3e3e3] bg-white text-[#555]">
                <FaCogs size={13} />
              </span>
            </div>
            <div className="mt-[12px] grid grid-cols-[507px_507px_507px] items-start gap-x-[29px]">
              <MainInfo />
              <div className="flex flex-col gap-y-[12px]">
                <ClosedCard icon={<FaRegFileAlt size={18} />} title="Документ" gap="ml-[2px]" />
                <ClosedCard icon={<FaAlignLeft size={18} />} title="Пользовательские поля" gear gap="ml-[10px]" />
                <ClosedCard icon={<FaUser size={14} />} title="Заказчик и Получатель" gap="ml-[1px]" />
                <ClosedCard icon={<FaRegFileAlt size={18} />} title="Сборка" gap="ml-[3px]" className="mt-[2px]" />
              </div>
              <div className="flex flex-col">
                <Delivery />
                <ClosedCard icon={<FaTruck size={19} className="-scale-x-100" />} title="Курьеру" gap="ml-[11px]" className="mt-[12px]" />
              </div>
            </div>
            <ProductBar />
          </main>
        </div>
      </div>
      <RightRail />
    </div>
  );
}
